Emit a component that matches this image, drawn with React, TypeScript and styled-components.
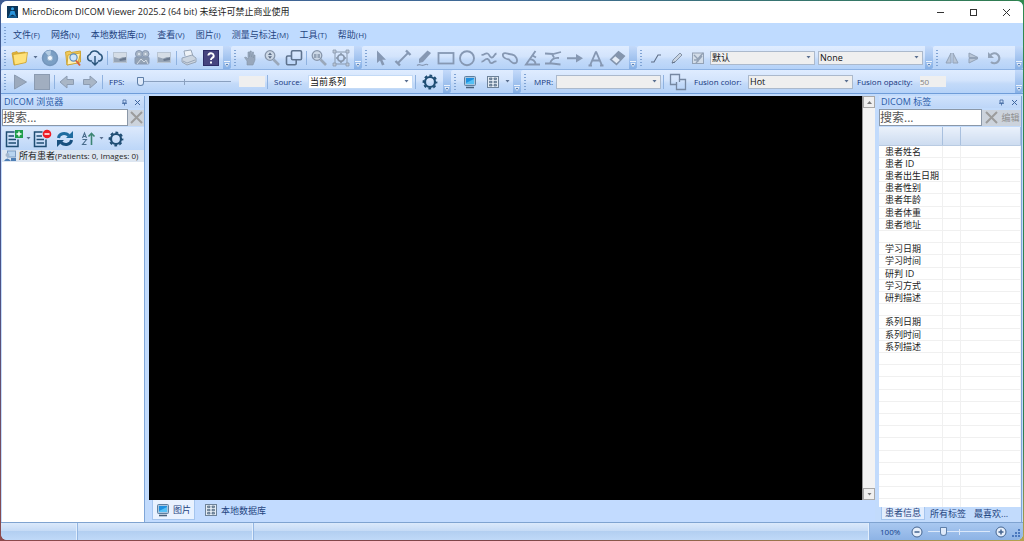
import React from "react";
import styled, { createGlobalStyle, css } from "styled-components";

const latin = `"Open Sans", "Noto Sans", "Noto Sans CJK SC", sans-serif`;

const GlobalStyle = createGlobalStyle`
  * { box-sizing: border-box; }
  html, body { margin: 0; padding: 0; }
  body { font-family: ${latin}; font-size: 9px; color: #15428b; background: #39567c; overflow: hidden; }
  button, input, select { font: inherit; color: inherit; margin: 0; padding: 0; border: 0; background: none; }
  button:focus, input:focus, select:focus { outline: none; }
  svg { display: block; }
`;

/* ---------- window frame ---------- */
const Desktop = styled.div`
  height: 100vh;
  padding: 1px;
  background:
    linear-gradient(90deg, #8c4a4c 0%, #7d4448 50%, #b3a24f 100%) bottom / 100% 8px no-repeat,
    linear-gradient(#3f5c92 0%, #4a5288 50%, #8c4a4c 100%) left / 8px 100% no-repeat,
    linear-gradient(#2f8a4f 0%, #2f7d4f 80%, #b3a24f 100%) right / 8px 100% no-repeat,
    linear-gradient(90deg, #3f5c92 0%, #3f6a96 50%, #2f7d4f 100%);
`;
const Frame = styled.div`
  height: 100%;
  display: flex;
  flex-direction: column;
  border-radius: 6px;
  overflow: hidden;
  background: #bfdbff;
`;
const TitleBar = styled.header`
  flex: 0 0 22px;
  display: flex;
  align-items: center;
  gap: 4px;
  padding-left: 6px;
  background: #fff;
  color: #222;
  white-space: nowrap;
`;
const AppName = styled.h1`
  flex: 1;
  margin: 0;
  font-size: 9px;
  font-weight: 400;
  line-height: 20px;
`;
const Captions = styled.div`
  display: flex;
`;
const Caption = styled.button`
  width: 33px;
  height: 22px;
  display: grid;
  place-items: center;
`;
const MenuBar = styled.nav`
  flex: 0 0 23px;
  display: flex;
  align-items: center;
`;
const MenuList = styled.div`
  display: flex;
  gap: 11px;
  padding-left: 3px;
`;
const MenuItem = styled.button`
  font-size: 9px;
  line-height: 20px;
  white-space: nowrap;
  color: #1f4480;
  small { font-size: 8px; }
`;

/* ---------- tool bars ---------- */
const ToolRow = styled.div`
  flex: 0 0 24px;
  display: flex;
  border-bottom: 1px solid #8db2e3;
  &:last-of-type { border-bottom-color: #6f9dd9; }
`;
const BandBox = styled.div<{ $w?: number }>`
  flex: ${(p) => (p.$w ? `0 0 ${p.$w}px` : "1 0 0")};
  min-width: 0;
  display: flex;
  align-items: center;
  background: linear-gradient(#dfecff 0%, #d3e4fc 45%, #c3daf9 60%, #b5d2f8 100%);
  border-radius: 2px;
`;
const Grip = styled.span`
  flex: 0 0 3px;
  height: 16px;
  margin: 0 3px;
  background: repeating-linear-gradient(#7fa3d4 0 1px, transparent 1px 3px);
  background-size: 2px 100%;
  background-repeat: no-repeat;
`;
const CapButton = styled.button`
  flex: 0 0 8px;
  align-self: stretch;
  margin-left: auto;
  display: flex;
  align-items: flex-end;
  justify-content: center;
  padding-bottom: 2px;
  border-radius: 0 2px 2px 0;
  background: linear-gradient(#c4dafa, #86b0e6);
`;
const Group = styled.div<{ $w: number; $gap?: number }>`
  flex: 0 0 ${(p) => p.$w}px;
  margin-left: ${(p) => p.$gap ?? 0}px;
  display: flex;
  align-items: center;
  justify-content: space-between;
`;
const Tool = styled.button<{ $w?: number }>`
  flex: 0 0 ${(p) => p.$w ?? 20}px;
  height: 22px;
  display: flex;
  align-items: center;
  justify-content: center;
`;
const Sep = styled.span`
  flex: 0 0 1px;
  height: 14px;
  margin: 0 2px;
  background: #8fb2e0;
`;
const Label = styled.label<{ $w: number }>`
  flex: 0 0 ${(p) => p.$w}px;
  padding-left: 4px;
  font-size: 8px;
  color: #15357e;
  white-space: nowrap;
`;
const SelectBox = styled.span<{ $white?: boolean }>`
  flex: 0 0 105px;
  height: 14px;
  display: grid;
  align-items: center;
  border: 1px solid ${(p) => (p.$white ? "#c3daf6" : "#abb9cc")};
  background: ${(p) => (p.$white ? "#fff" : "#efefef")};
  > * { grid-area: 1 / 1; }
  > svg { justify-self: end; margin-right: 3px; pointer-events: none; }
`;
const Select = styled.select`
  appearance: none;
  width: 100%;
  height: 12px;
  padding-left: 1px;
  font-size: 9px;
  line-height: 12px;
  color: #111;
`;
const NumberBox = styled.input<{ $w: number }>`
  flex: 0 0 ${(p) => p.$w}px;
  width: ${(p) => p.$w}px;
  height: 11px;
  font-size: 8px;
  background: #efefef;
  color: #808080;
`;
const Range = styled.input<{ $w: number; $light?: boolean }>`
  appearance: none;
  flex: 0 0 ${(p) => p.$w}px;
  width: ${(p) => p.$w}px;
  height: 12px;
  --line: ${(p) => (p.$light ? "#dbe8fa" : "#8aa0bf")};
  background:
    linear-gradient(var(--line), var(--line)) center / 1px 6px no-repeat,
    linear-gradient(var(--line), var(--line)) center / 100% 1px no-repeat;
  &::-webkit-slider-thumb {
    appearance: none;
    width: 7px;
    height: 9px;
    border: 1px solid #5f7fa8;
    border-radius: 1px 1px 4px 4px;
    background: #dfeafa;
  }
`;

/* ---------- work area ---------- */
const Work = styled.main`
  flex: 1;
  min-height: 0;
  display: flex;
  gap: 4px;
  padding: 2px 1px 0 1px;
  background: #c2dbfc;
`;
const Pane = styled.section`
  flex: 0 0 143px;
  min-width: 0;
  display: flex;
  flex-direction: column;
  border-right: 1px solid #7fa6d8;
  overflow: hidden;
`;
const PaneHead = styled.header`
  flex: 0 0 12px;
  display: flex;
  align-items: center;
  padding: 0 3px 0 2px;
  gap: 6px;
  color: #2a5ba8;
  background: linear-gradient(#cfe2fc, #bdd6f8);
`;
const PaneTitle = styled.h2`
  flex: 1;
  margin: 0;
  font-size: 9px;
  line-height: 12px;
  font-weight: 400;
`;
const SearchRow = styled.div`
  flex: 0 0 19px;
  display: flex;
  align-items: center;
  color: #9a9a9a;
`;
const Search = styled.input<{ $w: number }>`
  flex: 0 0 ${(p) => p.$w}px;
  width: ${(p) => p.$w}px;
  height: 17px;
  border: 1px solid #8b98a8;
  background: #fff;
  font-size: 12px;
  color: #222;
  &::placeholder { color: #555; opacity: 1; }
`;
const GreyButton = styled.button<{ $w: number }>`
  flex: 0 0 ${(p) => p.$w}px;
  height: 16px;
  display: grid;
  place-items: center;
  background: #ccd3dc;
  color: #8f8f8f;
  font-size: 9px;
  white-space: nowrap;
`;
const BrowserTools = styled.div`
  flex: 0 0 23px;
  display: flex;
  align-items: center;
  padding-left: 2px;
  background: linear-gradient(#dce9fc, #bcd6f8);
`;
const Tree = styled.ul`
  flex: 1;
  margin: 0;
  padding: 0;
  list-style: none;
  background: #fff;
`;
const TreeItem = styled.li`
  height: 12px;
  display: flex;
  align-items: center;
  gap: 3px;
  padding-left: 2px;
  font-size: 9px;
  line-height: 12px;
  white-space: nowrap;
  color: #1c1c1c;
  background: #dde6f1;
  small { font-size: 8px; }
`;
const Center = styled.section`
  flex: 1;
  min-width: 0;
  display: flex;
  flex-direction: column;
`;
const Stage = styled.div`
  flex: 1;
  min-height: 0;
  display: flex;
  background: #000;
`;
const Canvas = styled.div`
  flex: 1;
  background: #000;
`;
const ScrollBar = styled.div`
  flex: 0 0 13px;
  display: flex;
  flex-direction: column;
  justify-content: space-between;
  border-left: 1px solid #999;
  background: #f3f3f3;
`;
const ScrollButton = styled.button`
  height: 12px;
  display: grid;
  place-items: center;
  border: 1px solid #a8a8a8;
  background: #f0f0f0;
`;
const ViewTabs = styled.div`
  flex: 0 0 22px;
  display: flex;
  gap: 6px;
  padding-left: 3px;
  background: #c2dbff;
`;
const ViewTab = styled.button<{ $on?: boolean }>`
  height: 20px;
  display: flex;
  align-items: center;
  gap: 3px;
  padding: 0 3px;
  font-size: 9px;
  color: #1f4480;
  ${(p) => p.$on && css`background: #e9f2ff; border: 1px solid #a5c5ee; border-top: 0;`}
`;
const TableWrap = styled.div`
  flex: 1;
  min-height: 0;
  overflow: hidden;
  background: #fff;
`;
const TagTable = styled.table`
  width: 100%;
  table-layout: fixed;
  border-collapse: collapse;
  color: #1c1c1c;
  font-size: 9px;
  line-height: 11px;
  th {
    height: 18px;
    padding: 0;
    background: linear-gradient(#eaf1fb, #cddcf0);
    border-right: 1px solid #a9c0de;
    border-bottom: 1px solid #b9cbe2;
  }
  td {
    height: 12px;
    padding: 0;
    overflow: visible;
    white-space: nowrap;
    border-right: 1px solid #f0f0f0;
    border-bottom: 1px solid #f0f0f0;
  }
  td:first-child { padding-left: 6px; }
  tr:nth-child(5n) td { height: 13px; }
`;
const TagTabs = styled.div`
  flex: 0 0 15px;
  display: flex;
  gap: 2px;
  padding: 0 2px;
`;
const TagTab = styled.button<{ $on?: boolean }>`
  height: 13px;
  padding: 0 3px;
  font-size: 9px;
  line-height: 12px;
  white-space: nowrap;
  color: #1f4480;
  ${(p) => p.$on && css`background: #e3eefe; border: 1px solid #a5c5ee; border-top: 0;`}
`;

/* ---------- status bar ---------- */
const Status = styled.footer`
  flex: 0 0 18px;
  display: flex;
  border-top: 1px solid #7fa3d0;
  background: linear-gradient(#dbe9fb 0%, #c6dbf6 45%, #b3cff1 50%, #c0d9f8 100%);
`;
const StatusCell = styled.div<{ $w?: number }>`
  flex: ${(p) => (p.$w ? `0 0 ${p.$w}px` : "1")};
  border-right: 1px solid #94b6e2;
  box-shadow: inset -1px 0 #e2eefc;
`;
const Zoom = styled.div`
  flex: 0 0 151px;
  display: flex;
  align-items: center;
  gap: 5px;
  padding-left: 10px;
  font-size: 8px;
  color: #15428b;
  background: linear-gradient(#a9c8f0, #8db3e5);
`;
const ZoomValue = styled.output`
  flex: 0 0 26px;
`;
const RoundButton = styled.button`
  flex: 0 0 12px;
  height: 12px;
`;
const Corner = styled.span`
  align-self: flex-end;
  margin-left: auto;
  padding: 0 3px 3px 0;
`;

/* ---------- drawings ---------- */
const G = "#8698b3";
const N = "#1f4d73";

const Svg = ({ s = 18, w, children, c = G, sw = 1.5 }: { s?: number; w?: number; children: React.ReactNode; c?: string; sw?: number }) => (
  <svg width={w ?? s} height={s} viewBox={`0 0 ${w ?? s} ${s}`} fill="none" stroke={c} strokeWidth={sw} aria-hidden="true">
    {children}
  </svg>
);
const Caret = ({ c = "#5a6f90" }: { c?: string }) => (
  <svg width="5" height="3" viewBox="0 0 5 3" aria-hidden="true"><path d="M.5 0H4.500L2.500 2.500Z" fill={c} /></svg>
);
const AppIcon = () => (
  <svg width="11" height="12" viewBox="0 0 11 12" aria-hidden="true">
    <rect width="11" height="12" fill="#0b3558" />
    <circle cx="5.500" cy="2.800" r="1.500" fill="#38a3e6" />
    <path d="M2 10.500 3.500 5H7.500L9 10.500 5.500 8.500Z" fill="#2b95dc" />
    <path d="M1 11H10" stroke="#1d7cc0" />
  </svg>
);
const Folder = () => (
  <Svg c="#c99c22" sw={0.7}>
    <path d="M1 4 6 2.5 7 4 14 3 15 13 3 16Z" fill="#e0b23c" />
    <path d="M2 5.5 16.5 3.5 15 13.5 3.5 16Z" fill="#ffe27a" />
  </Svg>
);
const Disc = () => (
  <Svg>
    <circle cx="9" cy="9" r="7.5" fill="#7b9fc4" stroke="#7395bb" />
    <path d="M9 9 4 3A8 8 0 0 1 10 1.5Z" fill="#b4cde4" stroke="none" />
    <circle cx="9" cy="9" r="2.6" fill="#f0f6fc" stroke="#9db8d2" strokeWidth="1" />
  </Svg>
);
const FolderSearch = () => (
  <Svg sw={0.8} c="#c99c22">
    <path d="M1.500 3 6 2 7 3.500 16.500 2V13L3 16Z" fill="#f0c95c" />
    <path d="M4 6 16.500 4 14 14 3 16Z" fill="#fff0b5" />
    <circle cx="9.5" cy="8.500" r="3.6" fill="#cfe6fb" stroke="#5d8fc0" strokeWidth="1.2" />
    <path d="M12 11.500 16 16.500" stroke="#d9603b" strokeWidth="2" />
  </Svg>
);
const CloudDown = () => (
  <Svg c="#2b567c" sw={1.5}>
    <path d="M6 12H4.5A3.4 3.4 0 0 1 4 5.4 5 5 0 0 1 13.4 5 3.6 3.6 0 0 1 13.5 12H12" />
    <path d="M9 7V16M6 13 9 16 12 13" />
  </Svg>
);
const Picture = () => (
  <Svg sw={1} c="#b9c5d3">
    <rect x="2.5" y="3.5" width="13" height="10" fill="#d5dde6" />
    <path d="M3 8 8 9.500 12 8 15 9V13H3Z" fill="#97a5b6" stroke="none" />
    <path d="M8 10.500 15 8V11L9 12Z" fill="#6b7a8f" stroke="none" />
  </Svg>
);
const Film = () => (
  <Svg sw={1}>
    <circle cx="6" cy="5" r="3.5" fill="#a9b6c5" /><circle cx="12.500" cy="5" r="3.5" fill="#a9b6c5" />
    <rect x="2" y="8" width="14" height="7" rx="1" fill="#93a2b4" />
    <path d="M4 15 8 10 11 13 13 11 15 15" stroke="#d5dde6" />
    <circle cx="6" cy="5" r="1" fill="#e4ebf3" stroke="none" /><circle cx="12.500" cy="5" r="1" fill="#e4ebf3" stroke="none" />
  </Svg>
);
const Printer = () => (
  <Svg sw={1} c="#98a6b8">
    <path d="M5 7 4 2 11 1 13 7" fill="#eef2f7" />
    <path d="M2 9 12 6 16 9V13L7 16 2 13Z" fill="#ccd5e0" />
    <path d="M3 12 7 14 15 11" />
  </Svg>
);
const Help = () => (
  <Svg sw={1} c="#2d2c66">
    <rect x="1.5" y="1.500" width="15" height="15" fill="#46447f" />
    <path d="M6.300 6.500A2.700 2.500 0 1 1 10 9Q9 9.600 9 11" stroke="#fff" strokeWidth="1.9" />
    <path d="M9 12.500V14.500" stroke="#fff" strokeWidth="2" />
  </Svg>
);
const Hand = () => (
  <Svg sw={1}>
    <path d="M6 16V12L3.500 8.500 5 8 7 10V3H8.500V8L9 2H10.300L10.500 8 11.300 3H12.500L12.300 9 13 6H14V11L12 16Z" fill="#98a7bb" stroke="#8595aa" strokeWidth=".6" />
  </Svg>
);
const Magnifier = ({ one }: { one?: boolean }) => (
  <Svg sw={1.3} c="#8796ab">
    <circle cx="7" cy="6.500" r="4.800" fill="#ccd8e6" />
    <path d="M10.500 10.500 16 16" strokeWidth="2.600" stroke="#9aa8ba" />
    {one ? <path d="M5 5V9M9 5V9M7 5.500V6.500M7 7.500V8.500" stroke="#5d6e86" strokeWidth="1" /> : <path d="M5 6 7 3.500 9 6ZM5 7.200 7 9.700 9 7.200Z" fill="#5d6e86" stroke="none" />}
  </Svg>
);
const Windows = () => (
  <Svg c="#5f738e" sw={1.600}>
    <rect x="6.500" y="1.800" width="10" height="9" rx="1.200" />
    <path d="M6.500 7H2.700A1.200 1.200 0 0 0 1.500 8.200V14.500A1.200 1.200 0 0 0 2.700 15.700H10A1.200 1.200 0 0 0 11.200 14.500V11" />
  </Svg>
);
const Fit = () => (
  <Svg sw={1} c="#8a99ae">
    <rect x="3" y="3" width="12" height="12" />
    <circle cx="9" cy="9" r="3.200" strokeWidth="1.600" />
    <path d="M1 1H4V4H1ZM14 1H17V4H14ZM1 14H4V17H1ZM14 14H17V17H14Z" fill="#b9c6d6" strokeWidth=".8" />
    <path d="M9 3.500 7.500 5.500H10.500ZM9 14.500 7.500 12.500H10.500ZM3.500 9 5.500 7.500V10.500ZM14.500 9 12.500 7.500V10.500Z" fill="#8291a6" stroke="none" />
  </Svg>
);
const Pointer = () => <Svg><path d="M5 1.500V14L8 11.500 10 16.500 12.500 15.500 10.300 10.800H14Z" fill={G} stroke="none" /></Svg>;
const Ruler = () => <Svg sw={1.800}><path d="M3.500 14.500 14.500 3.500" /><path d="M1.500 12 6 16.500M12 1.500 16.500 6" strokeWidth="2.400" /></Svg>;
const Marker = () => (
  <Svg><path d="M4 10 12.500 1.500 16 4 8 13 4 14Z" fill={G} stroke="none" /><path d="M2 16.500C5 14 6 17.500 9 16S12 15 13 16" strokeWidth="1.200" /></Svg>
);
const Rect = () => <Svg sw={1.800}><rect x="1.500" y="4" width="15" height="10.500" /></Svg>;
const Ellipse = () => <Svg sw={1.900}><circle cx="9" cy="9.200" r="7" /></Svg>;
const Curve = () => <Svg sw={1.800}><path d="M1.500 5.500C4 7 5 3.500 7.500 4.500 10 5.500 9 8 11.500 8.500 14 9 14 5 16.500 4.500M1.500 12.500C4 13 4.500 9.500 7.500 10 10.500 10.500 8.500 14 11.500 14.200 14 14.300 13.500 11.500 16.500 12.500" /></Svg>;
const Blob = () => <Svg sw={1.800}><path d="M2 5C4 2.500 7 5.500 11 5.500 15 6 17 11 15.500 13.500 13 15.500 10 13 8 10.500 5 10 1 8.500 2 5Z" /></Svg>;
const Angle = () => <Svg sw={1.900}><path d="M12.500 2 3 15.500H17M6 10.500C10 10 12.500 12 12.500 15.500M9.500 6.500 13 8.500" /></Svg>;
const Cobb = () => <Svg sw={1.800}><path d="M1 4.500 9 5 17 3M1 14.500H8L16.500 15.500M8 5 10 8.500M6 14.500C7 11 10 8.500 15 9" /></Svg>;
const Arrow = () => <Svg sw={1.900}><path d="M1 9.200H11" /><path d="M10 5 17 9.200 10 13.500Z" fill={G} stroke="none" /></Svg>;
const LetterA = () => <Svg sw={1.900}><path d="M3 16.500 9 2.500 15 16.500M5.200 11.500H12.800M1.500 16.500H5M13 16.500H16.500" strokeLinejoin="bevel" /></Svg>;
const Eraser = () => <Svg sw={1.300} c="#8495ad"><path d="M1.500 10.500 9.500 2.500 15.500 7 7.500 15.500Z" fill="#8495ad" /><path d="M3 10.500 6.300 7.300 10.800 11 7.500 14.300Z" fill="#e3ebf5" stroke="none" /></Svg>;
const Segment = () => <Svg s={14} sw={1.100} c="#5f6f88"><path d="M2 11H5L9 4H12" /></Svg>;
const Pencil = () => <Svg s={14} sw={1} c="#8493a8"><path d="M2 12 3 9 10 2 12 4 5 11Z" fill="#cad5e2" /><path d="M2 12 5 11" stroke="#5f6f88" /></Svg>;
const Edit = () => <Svg s={14} sw={1} c="#93a2b6"><rect x="1.500" y="2" width="11" height="10.500" fill="#d3dde9" /><path d="M3 4 6 7 7 11M12 2 6 9M5 12 11 5M3 9H6" strokeWidth="1.400" /></Svg>;
const FlipH = () => <Svg s={14} sw={1} c="#93a3b8"><path d="M6 2V12H1ZM8 2V12H13Z" fill="#b8c5d6" /></Svg>;
const FlipV = () => <Svg s={14} sw={1} c="#93a3b8"><path d="M3 2 12 6.500H3ZM3 12 12 7.500H3Z" fill="#b8c5d6" /></Svg>;
const Rotate = () => <Svg s={14} sw={2.200} c="#93a3b8"><path d="M3.500 4A5 5 0 1 1 4 11" /><path d="M1 1V7H7Z" fill="#93a3b8" stroke="none" /></Svg>;
const Play = () => <Svg sw={1} c="#8b9bb1"><path d="M3.500 2 15.500 9 3.500 16Z" fill="#9caabd" /></Svg>;
const Stop = () => <Svg sw={1} c="#8b9bb1"><rect x="1.500" y="1.500" width="15" height="15" fill="#a1aec0" /></Svg>;
const Step = ({ right }: { right?: boolean }) => (
  <Svg s={16} sw={1} c="#8c9cb2"><path transform={right ? "translate(16 0) scale(-1 1)" : undefined} d="M1 8 8 2V5.500H14.500V10.500H8V14Z" fill="#a9b6c6" /></Svg>
);
const Gear = () => (
  <Svg s={16} c={N} sw={2.200}>
    <circle cx="8" cy="8" r="5" />
    <circle cx="8" cy="8" r="6.500" strokeWidth="1.800" strokeDasharray="2.800 2.305" strokeDashoffset="1.400" />
  </Svg>
);
const Monitor = () => (
  <Svg s={14} sw={1} c="#5f7f9f">
    <rect x="1.500" y="1.500" width="11" height="9" rx="1" fill="#a9c6e0" />
    <rect x="3" y="3" width="8" height="6" fill="#1e90e0" stroke="none" />
    <path d="M3 8 11 4V9H3Z" fill="#55c0f5" stroke="none" />
    <path d="M3 12.500H11" stroke="#48617c" strokeWidth="1.600" />
  </Svg>
);
const Tiles = () => (
  <Svg s={14} sw={1} c="#6d8299">
    <rect x="1.500" y="1.500" width="11" height="11" fill="#e4ecf4" />
    <path d="M3.500 3H6V4.500H3.500ZM8 3H10.500V4.500H8ZM3.500 6.300H6V7.800H3.500ZM8 6.300H10.500V7.800H8ZM3.500 9.500H6V11H3.500ZM8 9.500H10.500V11H8Z" fill="#8fa4ba" stroke="#50677f" strokeWidth=".7" />
  </Svg>
);
const Fusion = () => <Svg sw={1.300} c="#7688a2"><path d="M1.500 1.500H10.500V6.500H16.500V16.500H7.500V11.500H1.500Z" /><path d="M7.500 11.500V9M10.500 6.500V9" /></Svg>;
const ListDoc = ({ remove }: { remove?: boolean }) => (
  <Svg s={19} c={N} sw={1.500}>
    <path d="M9.500 3H1.500V17.500H13V10.500M3.500 7H9M3.500 10.500H11M3.500 14H11" />
    {remove
      ? <><circle cx="14" cy="5" r="4.300" fill="#ee1c25" stroke="none" /><path d="M11.500 5H16.500" stroke="#fff" strokeWidth="1.400" /></>
      : <><rect x="10" y="1" width="8" height="8" fill="#1f9d4c" stroke="none" /><path d="M11.500 5H16.500M14 2.500V7.500" stroke="#fff" strokeWidth="1.400" /></>}
  </Svg>
);
const Refresh = () => (
  <Svg s={18} c="#1f6c9f" sw={3}>
    <path d="M2.500 8C3 3.500 9 2 13 5.500" /><path d="M15.500 10C15 14.500 9 16 5 12.500" stroke="#18507f" />
    <path d="M17 1V8H10Z" fill="#1f6c9f" stroke="none" /><path d="M1 17V10H8Z" fill="#18507f" stroke="none" />
  </Svg>
);
const Sort = () => (
  <Svg s={15} c="#4a6d8c" sw={1.100}>
    <path d="M1.500 7 3.500 2 5.500 7M2.200 5.500H4.800M1.500 8.500H5.500L1.500 13.500H5.500" />
    <path d="M10.500 14V3M7.500 5.500 10.500 2.300 13.500 5.500" stroke="#3d8573" strokeWidth="1.600" />
  </Svg>
);
const People = () => (
  <Svg s={12} sw={1} c="#7c9cc2">
    <rect x="3.500" y="1" width="8" height="6" fill="#b8d4f0" /><circle cx="3.500" cy="5" r="2" fill="#a5b8cf" stroke="none" />
    <path d="M0 11Q3 6 7 11ZM7 8H12V11H7Z" fill="#4f7fb5" stroke="none" />
  </Svg>
);
const Pin = () => <Svg s={7} sw={0.800} c="#3f66a0"><path d="M2 1H5V4H2ZM1 4.400H6M3.500 4V6.500" /></Svg>;
const Cross = ({ s = 7, c = "#3f66a0", sw = 1 }: { s?: number; c?: string; sw?: number }) => (
  <Svg s={s} c={c} sw={sw}><path d={`M1 1 ${s - 1} ${s - 1}M${s - 1} 1 1 ${s - 1}`} /></Svg>
);
const SizeDots = () => (
  <Svg s={8} sw={0}><path d="M6 0H8V2H6ZM3 3H5V5H3ZM6 3H8V5H6ZM0 6H2V8H0ZM3 6H5V8H3ZM6 6H8V8H6Z" fill="#4a78bd" /></Svg>
);

/* ---------- small composites ---------- */
const Cap = () => (
  <CapButton aria-label="工具栏选项">
    <svg width="6" height="6" viewBox="0 0 6 6" aria-hidden="true"><path d="M0 .5H6M1 2.500H5L3 5.500Z" stroke="#fff" strokeWidth=".8" fill="#3f6fb0" /></svg>
  </CapButton>
);
const Band = ({ w, children }: { w?: number; children: React.ReactNode }) => (
  <BandBox $w={w}><Grip />{children}<Cap /></BandBox>
);
const Tools = ({ items, w }: { items: [string, React.ReactNode][]; w: number }) => (
  <Group $w={w}>{items.map(([name, icon]) => <Tool key={name} aria-label={name}>{icon}</Tool>)}</Group>
);
const Choice = ({ id, label, value, white }: { id: string; label?: string; value: string; white?: boolean }) => (
  <SelectBox $white={white}>
    <Select id={id} aria-label={label} defaultValue={value}><option>{value}</option></Select>
    <Caret />
  </SelectBox>
);

const menus = [["文件", "F"], ["网络", "N"], ["本地数据库", "D"], ["查看", "V"], ["图片", "I"], ["测量与标注", "M"], ["工具", "T"], ["帮助", "H"]];
const tags = ["患者姓名", "患者 ID", "患者出生日期", "患者性别", "患者年龄", "患者体重", "患者地址", "", "学习日期", "学习时间", "研判 ID", "学习方式", "研判描述", "", "系列日期", "系列时间", "系列描述"];
const rows = [...tags, ...Array(16).fill("")];

export default function App() {
  return (
    <Desktop>
      <GlobalStyle />
      <Frame>
        <TitleBar>
          <AppIcon />
          <AppName>MicroDicom DICOM Viewer 2025.2 (64 bit) 未经许可禁止商业使用</AppName>
          <Captions>
            <Caption aria-label="最小化"><Svg s={9} c="#333" sw={1}><path d="M1 4.500H8" /></Svg></Caption>
            <Caption aria-label="最大化"><Svg s={9} c="#333" sw={1}><rect x="1.500" y="1.500" width="6" height="6" /></Svg></Caption>
            <Caption aria-label="关闭"><Cross s={9} c="#333" /></Caption>
          </Captions>
        </TitleBar>
        <MenuBar>
          <Grip />
          <MenuList>
            {menus.map(([name, key]) => <MenuItem key={key}>{name}<small>({key})</small></MenuItem>)}
          </MenuList>
        </MenuBar>
        <ToolRow>
          <Band w={230}>
            <Tool aria-label="打开"><Folder /></Tool>
            <Tool $w={10} aria-label="打开选项"><Caret /></Tool>
            <Tools w={65} items={[["光盘", <Disc />], ["扫描文件夹", <FolderSearch />], ["下载", <CloudDown />]]} />
            <Sep />
            <Tools w={64} items={[["导出图片", <Picture />], ["导出视频", <Film />], ["导出", <Picture />]]} />
            <Sep />
            <Tools w={42} items={[["打印", <Printer />], ["帮助", <Help />]]} />
          </Band>
          <Band w={131}>
            <Tools w={64} items={[["平移", <Hand />], ["缩放", <Magnifier />], ["窗口", <Windows />]]} />
            <Sep />
            <Tools w={42} items={[["实际大小", <Magnifier one />], ["适合窗口", <Fit />]]} />
          </Band>
          <Band w={275}>
            <Tools w={257} items={[["选择", <Pointer />], ["长度", <Ruler />], ["画笔", <Marker />], ["矩形", <Rect />], ["椭圆", <Ellipse />], ["曲线", <Curve />], ["封闭曲线", <Blob />], ["角度", <Angle />], ["科布角", <Cobb />], ["箭头", <Arrow />], ["文字", <LetterA />], ["擦除", <Eraser />]]} />
          </Band>
          <Band w={296}>
            <Tools w={62} items={[["线段", <Segment />], ["铅笔", <Pencil />], ["编辑窗口", <Edit />]]} />
            <Group $w={213} $gap={2}><Choice id="preset" label="预设" value="默认" /><Choice id="filter" label="滤镜" value="None" /></Group>
          </Band>
          <Band>
            <Tools w={62} items={[["水平翻转", <FlipH />], ["垂直翻转", <FlipV />], ["旋转", <Rotate />]]} />
          </Band>
        </ToolRow>
        <ToolRow>
          <Band w={450}>
            <Tools w={42} items={[["播放", <Play />], ["停止", <Stop />]]} />
            <Sep />
            <Tools w={43} items={[["上一帧", <Step />], ["下一帧", <Step right />]]} />
            <Sep />
            <Label $w={32} htmlFor="fps">FPS:</Label>
            <Range $w={94} id="fps" type="range" min={0} max={100} defaultValue={0} />
            <Group $w={8}><span /></Group>
            <NumberBox $w={26} aria-label="FPS" />
            <Sep />
            <Label $w={38} htmlFor="source">Source:</Label>
            <Choice id="source" value="当前系列" white />
            <Sep />
            <Tool $w={24} aria-label="设置"><Gear /></Tool>
          </Band>
          <Band w={70}>
            <Tools w={43} items={[["显示", <Monitor />], ["布局", <Tiles />]]} />
            <Tool $w={8} aria-label="布局选项"><Caret /></Tool>
          </Band>
          <Band>
            <Label $w={26} htmlFor="mpr">MPR:</Label>
            <Choice id="mpr" value="" />
            <Sep />
            <Tool $w={24} aria-label="融合"><Fusion /></Tool>
            <Label $w={58} htmlFor="fusion">Fusion color:</Label>
            <Choice id="fusion" value="Hot" />
            <Label $w={67} htmlFor="opacity">Fusion opacity:</Label>
            <NumberBox $w={26} id="opacity" defaultValue="50" />
          </Band>
        </ToolRow>
        <Work>
          <Pane>
            <PaneHead><PaneTitle>DICOM 浏览器</PaneTitle><button aria-label="固定"><Pin /></button><button aria-label="关闭"><Cross /></button></PaneHead>
            <SearchRow>
              <Search $w={126} aria-label="搜索患者" placeholder="搜索..." />
              <GreyButton $w={16} aria-label="清除"><Cross s={13} c="#9c9c9c" sw={2} /></GreyButton>
            </SearchRow>
            <BrowserTools>
              <Tool $w={20} aria-label="添加"><ListDoc /></Tool>
              <Tool $w={8} aria-label="添加选项"><Caret /></Tool>
              <Tool $w={21} aria-label="移除"><ListDoc remove /></Tool>
              <Tool $w={24} aria-label="刷新"><Refresh /></Tool>
              <Tool $w={22} aria-label="排序"><Sort /></Tool>
              <Tool $w={5} aria-label="排序选项"><Caret /></Tool>
              <Tool $w={24} aria-label="设置"><Gear /></Tool>
            </BrowserTools>
            <Tree><TreeItem><People /><span>所有患者<small>(Patients: 0, Images: 0)</small></span></TreeItem></Tree>
          </Pane>
          <Center>
            <Stage>
              <Canvas />
              <ScrollBar>
                <ScrollButton aria-label="向上"><Svg s={3} w={5} sw={0}><path d="M0 3H5L2.500 0Z" fill="#777" /></Svg></ScrollButton>
                <ScrollButton aria-label="向下"><Caret c="#777" /></ScrollButton>
              </ScrollBar>
            </Stage>
            <ViewTabs>
              <ViewTab $on><Monitor />图片</ViewTab>
              <ViewTab><Tiles />本地数据库</ViewTab>
            </ViewTabs>
          </Center>
          <Pane>
            <PaneHead><PaneTitle>DICOM 标签</PaneTitle><button aria-label="固定"><Pin /></button><button aria-label="关闭"><Cross /></button></PaneHead>
            <SearchRow>
              <Search $w={103} aria-label="搜索标签" placeholder="搜索..." />
              <GreyButton $w={18} aria-label="清除"><Cross s={13} c="#9c9c9c" sw={2} /></GreyButton>
              <GreyButton $w={21}>编辑</GreyButton>
            </SearchRow>
            <TableWrap>
              <TagTable>
                <colgroup><col width="63" /><col width="18" /><col /></colgroup>
                <thead><tr><th /><th /><th /></tr></thead>
                <tbody>{rows.map((t, i) => <tr key={i}><td>{t}</td><td /><td /></tr>)}</tbody>
              </TagTable>
            </TableWrap>
            <TagTabs><TagTab $on>患者信息</TagTab><TagTab>所有标签</TagTab><TagTab>最喜欢...</TagTab></TagTabs>
          </Pane>
        </Work>
        <Status>
          <StatusCell $w={77} /><StatusCell $w={176} /><StatusCell />
          <Zoom>
            <ZoomValue>100%</ZoomValue>
            <RoundButton aria-label="缩小"><Svg s={12} sw={1} c="#44648f"><circle cx="6" cy="6" r="5" fill="#e6effb" /><path d="M3.500 6H8.500" strokeWidth="1.500" /></Svg></RoundButton>
            <Range $w={62} $light type="range" min={0} max={100} defaultValue={22} aria-label="缩放" />
            <RoundButton aria-label="放大"><Svg s={12} sw={1} c="#44648f"><circle cx="6" cy="6" r="5" fill="#e6effb" /><path d="M3.500 6H8.500M6 3.500V8.500" strokeWidth="1.500" /></Svg></RoundButton>
            <Corner><SizeDots /></Corner>
          </Zoom>
        </Status>
      </Frame>
    </Desktop>
  );
}
